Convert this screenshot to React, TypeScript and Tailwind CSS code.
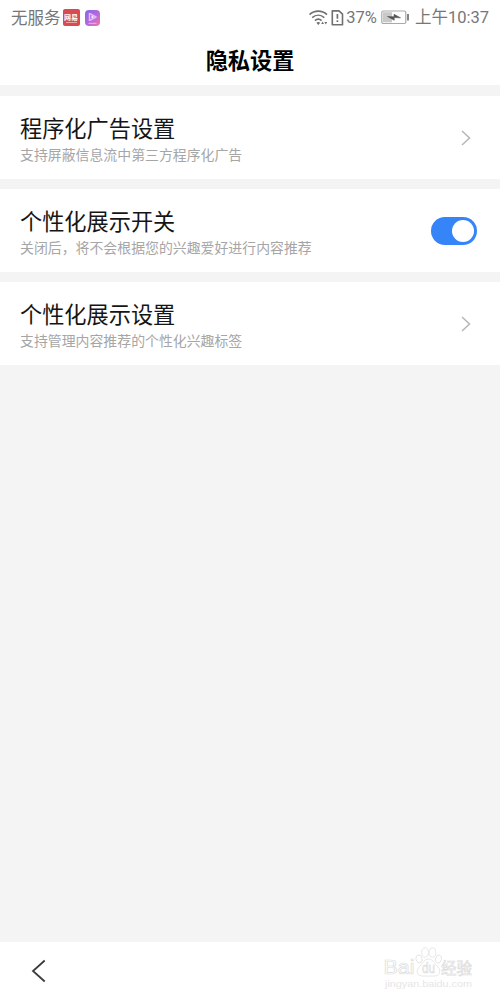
import { useState } from "react"

type SettingItem = {
  title: string
  description: string
  type: "link" | "switch"
}

const settings: SettingItem[] = [
  {
    title: "程序化广告设置",
    description: "支持屏蔽信息流中第三方程序化广告",
    type: "link"
  },
  {
    title: "个性化展示开关",
    description: "关闭后，将不会根据您的兴趣爱好进行内容推荐",
    type: "switch"
  },
  {
    title: "个性化展示设置",
    description: "支持管理内容推荐的个性化兴趣标签",
    type: "link"
  }
]

function StatusBar() {
  return (
    <div className="flex h-[35px] items-center justify-between pl-[11px] pr-[11px] text-[16.5px] leading-none text-[#777777]">
      <div className="flex items-center">
        <span>无服务</span>
        <span className="ml-[2px] flex h-[17px] w-[17px] flex-col items-center justify-center rounded-[2px] bg-[#d94b50] text-white">
          <span className="text-[7px] font-bold leading-[8px]">网易</span>
          <span className="mt-[1px] h-px w-[11px] bg-[#eba3a3]" />
        </span>
        <span className="ml-[5px] flex h-[16px] w-[15px] items-center justify-center rounded-[4px] bg-gradient-to-br from-[#8467e8] via-[#b268df] to-[#f0719f]">
          <svg width="13" height="14" viewBox="0 0 13 14" fill="none">
            <path d="M3.5 2v8M3.5 2.3L10 6 3.5 9.7" stroke="#e6b8ff" strokeWidth="1.5" strokeLinejoin="round" />
            <path d="M5.5 4.6v3L8 6z" fill="#fff" />
            <path d="M2.5 12.3h8" stroke="#f7b3cf" />
          </svg>
        </span>
      </div>

      <div className="flex items-center">
        {/* Wifi */}
        <svg width="20" height="16" viewBox="0 0 20 16" fill="none" stroke="#707070" strokeWidth="1.6">
          <path d="M.5 4.6C5.5 0 13 0 18 4.6" />
          <path d="M3.2 7.7c3.7-3.3 8.4-3.3 12.1 0" />
          <path d="M5.9 10.7c2.1-1.9 4.6-1.9 6.7 0" />
          <path d="M7.4 12.7c1-.9 2.8-.9 3.8 0l-1.9 2.2z" fill="#707070" stroke="none" />
          <path d="M13.6 11.6l1.4 2.4h-2.8zM16.8 14.5l-1.4-2.4h2.8z" fill="#707070" stroke="none" />
        </svg>
        {/* SIM alert */}
        <svg className="ml-[2px]" width="13" height="16" viewBox="0 0 13 16" fill="none" stroke="#707070" strokeWidth="1.6">
          <path d="M1.3.9H8l3.5 3.3v10.6H1.3z" strokeLinejoin="round" />
          <path d="M6.4 4.1v4.7M6.4 10.2v1.9" strokeWidth="1.7" />
        </svg>
        <span className="ml-[2px] pt-px font-['Roboto','Noto_Sans_CJK_SC',sans-serif] text-[16.5px]">37%</span>
        {/* Battery */}
        <svg className="ml-[4px]" width="29" height="15" viewBox="0 0 29 15" fill="none">
          <rect x=".8" y="1" width="24" height="12.5" rx="1.5" stroke="#a9a9a9" strokeWidth="1.2" />
          <rect x="2" y="2.2" width="9" height="10.1" fill="#c9c9c9" />
          <path d="M6.5 6.5l6.5.3V4.3l6.5 3.5-6.3-.2v2.6z" fill="#555" stroke="#555" strokeWidth=".6" strokeLinejoin="round" />
          <path d="M27 4v6.5" stroke="#777" strokeWidth="1.8" />
        </svg>
        <span className="ml-[5px] pt-px font-['Roboto','Noto_Sans_CJK_SC',sans-serif] text-[16.5px]">上午10:37</span>
      </div>
    </div>
  )
}

function Chevron() {
  return (
    <svg className="mr-[5px]" width="12" height="18" viewBox="0 0 12 18" fill="none">
      <path d="M2 2l7.5 7L2 16" stroke="#b8b8b8" strokeWidth="1.6" />
    </svg>
  )
}

function Toggle() {
  const [on, setOn] = useState(true)

  return (
    <button
      role="switch"
      aria-checked={on}
      onClick={() => setOn(!on)}
      className={`flex h-7 w-[46px] items-center rounded-full px-[3px] ${on ? "justify-end bg-[#3585f9]" : "justify-start bg-[#d5d5d5]"}`}
    >
      <span className="h-[22px] w-[22px] rounded-full bg-white" />
    </button>
  )
}

function Watermark() {
  return (
    <svg
      width="96"
      height="48"
      viewBox="0 0 96 48"
      fill="#fff"
      stroke="#dcdcdc"
      strokeWidth=".7"
      fontFamily="'Liberation Sans','Noto Sans CJK SC',sans-serif"
    >
      <text x="2.5" y="27" fontSize="21" textLength="31" lengthAdjust="spacingAndGlyphs">Bai</text>
      <ellipse cx="38" cy="12" rx="3" ry="4" transform="rotate(-15 38 12)" />
      <ellipse cx="44" cy="5.5" rx="3.3" ry="4.7" />
      <ellipse cx="51.5" cy="5.5" rx="3.3" ry="4.7" />
      <ellipse cx="57.5" cy="12" rx="3" ry="4" transform="rotate(15 57.5 12)" />
      <path d="M47.5 12c-4 0-5.5 4-8.5 7-4 3.5-4 9.5 2 10 4 .2 9 .2 13 0 6-.5 6-6.500 2-10-3-3-4.500-7-8.500-7z" />
      <text x="41" y="26" fontSize="14" textLength="13" lengthAdjust="spacingAndGlyphs">du</text>
      <text x="60" y="27" fontSize="16" textLength="31" lengthAdjust="spacingAndGlyphs">经验</text>
      <text x="4" y="40" fontSize="9" fill="#e6e6e6" stroke="none" textLength="87" lengthAdjust="spacingAndGlyphs">jingyan.baidu.com</text>
    </svg>
  )
}

export default function App() {
  return (
    <div className="flex h-[1000px] w-[500px] flex-col overflow-hidden bg-[#f4f4f4] font-['Noto_Sans_CJK_SC',sans-serif]">
      <header className="h-[85px] bg-white">
        <StatusBar />
        <h1 className="flex h-[48px] items-center justify-center text-[22.2px] font-bold leading-none text-black">隐私设置</h1>
      </header>

      <main className="mt-[11px] flex flex-1 flex-col gap-[10px]">
        {settings.map((item) => (
          <section key={item.title} className="flex h-[83px] items-center justify-between bg-white pl-5 pr-[23px]">
            <div className="pt-[3px]">
              <h2 className="text-[22.2px] leading-[30px] text-[#151515]">{item.title}</h2>
              <p className="text-[13.9px] leading-[24px] text-[#a6a6a6]">{item.description}</p>
            </div>
            {item.type === "switch" ? <Toggle /> : <Chevron />}
          </section>
        ))}
      </main>

      {/* Bottom navigation */}
      <nav className="flex h-[58px] items-center justify-between bg-white pl-[30px] pr-[23px]">
        <svg width="17" height="26" viewBox="0 0 17 26" fill="none">
          <path d="M14.7 2.5L3 13l11.7 10.5" stroke="#3c3c3c" strokeWidth="1.8" />
        </svg>
        <Watermark />
      </nav>
    </div>
  )
}
